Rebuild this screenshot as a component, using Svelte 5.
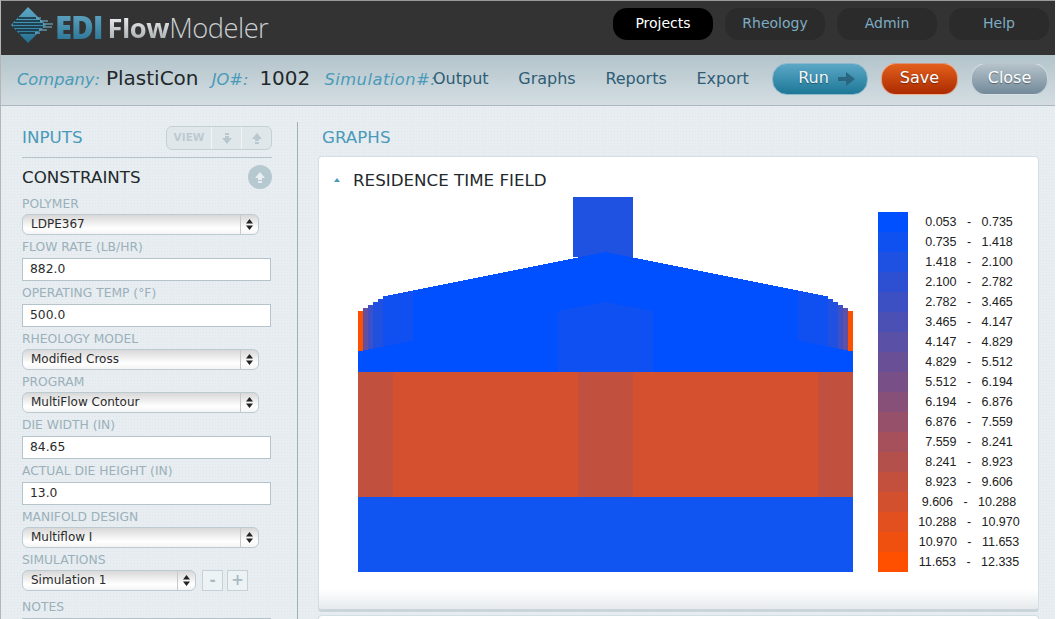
<script>
	const tabs = ['Projects', 'Rheology', 'Admin', 'Help'];
	const links = ['Output', 'Graphs', 'Reports', 'Export'];

	const fields = [
		{ label: 'POLYMER', value: 'LDPE367', kind: 'select' },
		{ label: 'FLOW RATE (LB/HR)', value: '882.0', kind: 'input' },
		{ label: 'OPERATING TEMP (°F)', value: '500.0', kind: 'input' },
		{ label: 'RHEOLOGY MODEL', value: 'Modified Cross', kind: 'select' },
		{ label: 'PROGRAM', value: 'MultiFlow Contour', kind: 'select' },
		{ label: 'DIE WIDTH (IN)', value: '84.65', kind: 'input' },
		{ label: 'ACTUAL DIE HEIGHT (IN)', value: '13.0', kind: 'input' },
		{ label: 'MANIFOLD DESIGN', value: 'Multiflow I', kind: 'select' }
	];

	const ranges = [
		['0.053', '0.735'], ['0.735', '1.418'], ['1.418', '2.100'], ['2.100', '2.782'],
		['2.782', '3.465'], ['3.465', '4.147'], ['4.147', '4.829'], ['4.829', '5.512'],
		['5.512', '6.194'], ['6.194', '6.876'], ['6.876', '7.559'], ['7.559', '8.241'],
		['8.241', '8.923'], ['8.923', '9.606'], ['9.606', '10.288'], ['10.288', '10.970'],
		['10.970', '11.653'], ['11.653', '12.335']
	];

	// legend runs from pure blue to pure orange
	function ramp(i) {
		const t = i / (ranges.length - 1);
		const r = Math.round(255 * t);
		const b = Math.round(255 * (1 - t));
		return `rgb(${r},80,${b})`;
	}

	const width = 495;
	const step = 5;

	// one 5px column per entry, from the left wall inward; the right wall mirrors it
	const columns = [];
	columns.push({ x: 5, top: 111, bottom: 153, fill: '#0050ff' });
	columns.push({ x: 10, top: 108, bottom: 152, fill: '#0050ff' });
	columns.push({ x: 15, top: 105, bottom: 151, fill: '#0050ff' });
	columns.push({ x: 20, top: 102, bottom: 150, fill: '#0050ff' });
	for (let x = 25, top = 99; x < 245; x += step, top -= 1) {
		columns.push({ x, top, bottom: 175, fill: '#0050ff' });
	}

	// the shaded columns near the walls
	const shades = [
		{ x: 5, top: 111, bottom: 153, fill: '#5f50a6' },
		{ x: 10, top: 108, bottom: 152, fill: '#3f50c6' },
		{ x: 15, top: 105, bottom: 151, fill: '#2050e0' },
		{ x: 20, top: 102, bottom: 150, fill: '#2050e0' }
	];
	for (let x = 25, top = 99, bottom = 149; x < 55; x += step, top -= 1, bottom -= 1) {
		shades.push({ x, top, bottom, fill: '#1050f0' });
	}

	const flip = (c) => ({ ...c, x: width - c.x - step });

	// logo streaks: [y, start, end of the dark part, end of the light tip]
	const streaks = [
		[11, 8, 26, 31],
		[14, 5, 30, 38],
		[17, 3, 33, 43],
		[20, 3, 33, 42],
		[23, 6, 29, 37],
		[26, 9, 25, 30]
	];
</script>

<div class="window">
	<header class="topbar">
		<div class="logo">
			<svg width="44" height="36" viewBox="0 0 44 36" aria-hidden="true">
				<defs>
					<linearGradient id="diamond" x1="0" y1="0" x2="0" y2="1">
						<stop offset="0" stop-color="#5fa9c8" />
						<stop offset="1" stop-color="#246f90" />
					</linearGradient>
				</defs>
				<path d="M1 18 L18 0 L36 18 L18 36 Z" fill="url(#diamond)" />
				{#each streaks as [y, a, b, c]}
					<path d="M{a} {y} H{b}" stroke="#17303c" stroke-width="1.6" />
					<path d="M{b} {y} H{c}" stroke="#6fa8c0" stroke-width="1.2" />
				{/each}
			</svg>
			<span class="edi">EDI</span>
			<span class="flow">Flow</span><span class="modeler">Modeler</span>
		</div>
		<nav class="tabs">
			{#each tabs as tab, i}
				<span class="tab" class:active={i === 0}>{tab}</span>
			{/each}
		</nav>
	</header>

	<div class="toolbar">
		<div class="info">
			<em>Company:</em><b class="company">PlastiCon</b>
			<em>JO#:</em><b class="jo">1002</b>
			<em class="sim-label">Simulation#:</em>
		</div>
		<div class="links">
			{#each links as link}
				<span>{link}</span>
			{/each}
		</div>
		<div class="actions">
			<button class="run">Run
				<svg width="17" height="14" viewBox="0 0 17 14" aria-hidden="true">
					<path d="M0 5 H8 V0 L17 7 L8 14 V9 H0 Z" fill="#2b6680" />
				</svg>
			</button>
			<button class="save">Save</button>
			<button class="close">Close</button>
		</div>
	</div>

	<div class="body">
		<aside class="inputs">
			<div class="inputs-head">
				<h2>INPUTS</h2>
				<div class="view-group">
					<span class="view">VIEW</span>
					<span class="view-btn">
						<svg width="10" height="11" viewBox="0 0 10 11" aria-hidden="true"><path d="M3 0 H7 V2 H3 Z M3 3 H7 V5 H10 L5 11 L0 5 H3 Z" fill="#b9c8cf" /></svg>
					</span>
					<span class="view-btn">
						<svg width="10" height="11" viewBox="0 0 10 11" aria-hidden="true"><path d="M5 0 L10 6 H7 V8 H3 V6 H0 Z M3 9 H7 V11 H3 Z" fill="#b9c8cf" /></svg>
					</span>
				</div>
			</div>
			<div class="constraints">
				<h3>CONSTRAINTS</h3>
				<span class="collapse">
					<svg width="10" height="11" viewBox="0 0 10 11" aria-hidden="true"><path d="M5 0 L10 6 H7 V8 H3 V6 H0 Z M3 9 H7 V11 H3 Z" fill="#e8eef1" /></svg>
				</span>
			</div>

			{#each fields as field}
				<div class="field {field.kind}-field">
					<span class="label">{field.label}</span>
					{#if field.kind === 'select'}
						<div class="select">
							<span>{field.value}</span>
							<i class="stepper"><svg width="7" height="11" viewBox="0 0 7 11" aria-hidden="true"><path d="M3.5 0 L7 4.5 H0 Z M3.5 11 L0 6.5 H7 Z" fill="#222" /></svg></i>
						</div>
					{:else}
						<input class="text" value={field.value} />
					{/if}
				</div>
			{/each}

			<div class="field sim-field">
				<span class="label">SIMULATIONS</span>
				<div class="sim-row">
					<div class="select sim">
						<span>Simulation 1</span>
						<i class="stepper"><svg width="7" height="11" viewBox="0 0 7 11" aria-hidden="true"><path d="M3.5 0 L7 4.5 H0 Z M3.5 11 L0 6.5 H7 Z" fill="#222" /></svg></i>
					</div>
					<span class="square">-</span>
					<span class="square">+</span>
				</div>
			</div>

			<div class="field">
				<span class="label">NOTES</span>
				<div class="notes"></div>
			</div>
		</aside>

		<main class="graphs">
			<h2>GRAPHS</h2>
			<section class="card">
				<h4><i class="tri"></i>RESIDENCE TIME FIELD</h4>
				<div class="plot">
					<svg class="field-plot" width="495" height="375" viewBox="0 0 495 375" shape-rendering="crispEdges" aria-hidden="true">
						<rect x="215" y="0" width="60" height="60" fill="#1f52e0" />
						<!-- base of the die under the stepped columns -->
						<rect x="0" y="154" width={width} height="21" fill="#0050ff" />
						<polygon points="5,153 25,149 55,144 55,175 5,175" fill="#0050ff" />
						<polygon points="490,153 470,149 440,144 440,175 490,175" fill="#0050ff" />
						<rect x="245" y="55" width="5" height="120" fill="#0050ff" />
						{#each columns as c}
							<rect x={c.x} y={c.top} width={step} height={c.bottom - c.top} fill={c.fill} />
							<rect x={flip(c).x} y={c.top} width={step} height={c.bottom - c.top} fill={c.fill} />
						{/each}
						{#each shades as c}
							<rect x={c.x} y={c.top} width={step} height={c.bottom - c.top} fill={c.fill} />
							<rect x={flip(c).x} y={c.top} width={step} height={c.bottom - c.top} fill={c.fill} />
						{/each}
						<rect x="0" y="114" width="5" height="40" fill="#ff5000" />
						<rect x="490" y="114" width="5" height="40" fill="#ff5000" />
						<polygon points="200,114 247,105 295,114 295,175 200,175" fill="#0f50f2" />
						<rect x="0" y="175" width={width} height="125" fill="#d4502e" />
						<rect x="0" y="175" width="35" height="125" fill="#c2503f" />
						<rect x="220" y="175" width="55" height="125" fill="#c2503f" />
						<rect x="460" y="175" width="35" height="125" fill="#c2503f" />
						<rect x="0" y="300" width={width} height="75" fill="#1055f2" />
					</svg>
					<ul class="legend">
						{#each ranges as [from, to], i}
							<li>
								<i class="swatch" style="background: {ramp(i)}"></i>
								<span class="range">{from}   -   {to}</span>
							</li>
						{/each}
					</ul>
				</div>
			</section>
			<div class="card next"></div>
		</main>
	</div>
</div>

<style>
	:global(body) {
		background: #fff;
	}
	.window {
		width: 1055px;
		height: 619px;
		overflow: hidden;
		display: flex;
		flex-direction: column;
		font-family: "DejaVu Sans", Verdana, sans-serif;
		border-left: 1px solid #b5b5b5;
		border-top: 1px solid #9a9a9a;
		box-sizing: border-box;
		background-color: #e7edf0;
		background-image: radial-gradient(#dfe6ea 1px, transparent 1px);
		background-size: 3px 3px;
	}

	.topbar {
		flex: 0 0 54px;
		background: #333;
		display: flex;
		align-items: flex-start;
		justify-content: space-between;
		padding: 7px 6px 0 9px;
		box-sizing: border-box;
	}
	.logo {
		display: flex;
		align-items: center;
		height: 36px;
		margin-top: 1px;
		font-family: "Open Sans", sans-serif;
		font-size: 27.3px;
		letter-spacing: -0.5px;
	}
	.logo svg {
		margin: -4px 1px 0 0;
	}
	.edi {
		font-weight: 800;
		font-size: 31px;
		margin-right: 5px;
		letter-spacing: -1px;
		background: linear-gradient(#6cb0cc, #1f6a8c);
		-webkit-background-clip: text;
		background-clip: text;
		color: transparent;
	}
	.flow {
		font-weight: 700;
		background: linear-gradient(#fff, #9aa0a4);
		-webkit-background-clip: text;
		background-clip: text;
		color: transparent;
	}
	.modeler {
		font-weight: 300;
		color: #c9ced1;
	}
	.tabs {
		display: flex;
		gap: 12px;
	}
	.tab {
		width: 100px;
		height: 32px;
		border-radius: 14px;
		background: #2b2b2b;
		color: #7fabc4;
		font-size: 14px;
		line-height: 30px;
		text-align: center;
	}
	.tab.active {
		background: #000;
		color: #fff;
	}

	.toolbar {
		flex: 0 0 51px;
		display: flex;
		align-items: flex-start;
		padding: 8px 7px 0 16px;
		box-sizing: border-box;
		background: linear-gradient(#b3c4cb, #d4dee2);
		border-bottom: 1px solid #aab8bd;
	}
	.info {
		flex: 0 0 416px;
		min-width: 0;
		white-space: nowrap;
		height: 32px;
		line-height: 30px;
	}
	.info em {
		font-size: 16.3px;
		color: #4a9ab9;
	}
	.info .sim-label {
		letter-spacing: 0.5px;
	}
	.info b {
		font-weight: 400;
		font-size: 20px;
		color: #23282b;
		margin-left: 6px;
	}
	.info .jo {
		margin-left: 11px;
		margin-right: 9px;
	}
	.company {
		margin-right: 8px;
	}
	.links {
		display: flex;
		gap: 29.7px;
		color: #2f5d75;
		font-size: 16px;
		line-height: 32px;
	}
	.actions {
		display: flex;
		margin-left: auto;
		gap: 13px;
	}
	.actions button {
		height: 32px;
		width: 77px;
		border-radius: 15px;
		font-family: inherit;
		font-size: 16px;
		color: #fff;
		padding: 0 0 4px;
		border: 1px solid rgba(255, 255, 255, 0.5);
		text-shadow: 0 1px 1px rgba(0, 0, 0, 0.4);
	}
	.actions .run {
		width: 96px;
		background: linear-gradient(#5ba7c6, #1d7797);
		display: flex;
		align-items: center;
		justify-content: center;
		gap: 9px;
		padding-left: 13px;
		color: #eef6fa;
		border-color: #8db9cc;
	}
	.actions .run svg {
		margin-top: 3px;
	}
	.actions .save {
		background: linear-gradient(#e2601c, #ab2a00);
	}
	.actions .close {
		background: linear-gradient(#b6c3ca, #72899a);
	}

	.body {
		flex: 1;
		display: flex;
		min-height: 0;
	}
	.inputs {
		flex: 0 0 297px;
		width: 297px;
		box-sizing: border-box;
		padding: 4px 25px 0 21px;
		border-right: 1px solid #9fb0b8;
		margin-top: 16px;
	}
	.inputs-head {
		display: flex;
		justify-content: space-between;
		align-items: flex-start;
		height: 32px;
		box-sizing: border-box;
		border-bottom: 1px solid #b5c3ca;
	}
	.inputs-head h2,
	.graphs h2 {
		margin: 0;
		font-size: 16.7px;
		font-weight: 400;
		color: #4a9ab9;
		line-height: 22px;
	}
	.view-group {
		display: flex;
		height: 22px;
		border: 1px solid #c5d1d7;
		border-radius: 6px;
		background: #dfe7ea;
		font-size: 10.5px;
		font-weight: 700;
		color: #bccad0;
	}
	.view {
		width: 44px;
		line-height: 21px;
		text-align: center;
		border-right: 1px solid #f1f5f6;
	}
	.view-btn {
		width: 29px;
		display: flex;
		align-items: center;
		justify-content: center;
		border-right: 1px solid #f1f5f6;
	}
	.view-btn:last-child {
		border-right: 0;
	}
	.constraints {
		display: flex;
		justify-content: space-between;
		align-items: center;
		height: 24px;
		margin: 7px 0 8px;
	}
	.constraints h3 {
		margin: 0;
		font-size: 16.7px;
		font-weight: 400;
		color: #23282b;
	}
	.collapse {
		width: 24px;
		height: 24px;
		border-radius: 50%;
		background: #b6c8d0;
		display: flex;
		align-items: center;
		justify-content: center;
	}
	.field {
		display: flex;
		flex-direction: column;
		align-items: flex-start;
	}
	.select-field {
		height: 43px;
	}
	.input-field {
		height: 46px;
	}
	.sim-field {
		height: 47px;
	}
	.label {
		height: 15px;
		line-height: 15px;
		margin-bottom: 3px;
		font-size: 12.3px;
		color: #9bb0bb;
		white-space: nowrap;
	}
	.select {
		width: 237px;
		height: 21px;
		margin-top: -1px;
		box-sizing: border-box;
		display: flex;
		justify-content: space-between;
		border: 1px solid #bccbd2;
		border-radius: 6px;
		background: linear-gradient(#d8d8d8, #fff 70%, #f4f4f4);
		font-size: 12px;
		line-height: 19px;
		color: #2a2a2a;
		padding-left: 8px;
	}
	.stepper {
		width: 17px;
		display: flex;
		align-items: center;
		justify-content: center;
		border-left: 1px solid #c9c9c9;
	}
	.text {
		width: 249px;
		height: 23px;
		box-sizing: border-box;
		border: 1px solid #b5c3ca;
		border-radius: 0;
		background: #fff;
		font-family: inherit;
		font-size: 12.3px;
		color: #2a2a2a;
		padding: 0 7px 1px;
		outline: none;
	}
	.sim-row {
		display: flex;
		gap: 4px;
	}
	.select.sim {
		width: 174px;
		margin-right: 2px;
	}
	.square {
		width: 21px;
		height: 21px;
		margin-top: -1px;
		box-sizing: border-box;
		border: 1px solid #c5d1d7;
		background: #edf2f4;
		color: #a9bac3;
		font-size: 15px;
		font-weight: 700;
		line-height: 18px;
		text-align: center;
	}
	.notes {
		width: 249px;
		height: 40px;
		border: 1px solid #b5c3ca;
		background: #fff;
		box-sizing: border-box;
	}

	.graphs {
		flex: 1;
		min-width: 0;
		padding: 21px 16px 0 20px;
	}
	.graphs h2 {
		line-height: 20px;
		margin: 0 0 9px 4px;
	}
	.card {
		height: 456px;
		box-sizing: border-box;
		background: linear-gradient(#fff 432px, #e6eaec);
		border: 1px solid #d5dee2;
		border-bottom: 3px solid #c9d5da;
		border-radius: 4px;
	}
	.card.next {
		height: 40px;
		margin-top: 3px;
		background: #fff;
	}
	.card h4 {
		margin: 0;
		height: 40px;
		display: flex;
		align-items: center;
		padding: 6px 0 0 15px;
		box-sizing: border-box;
		font-size: 16.7px;
		font-weight: 400;
		color: #23282b;
	}
	.tri {
		width: 0;
		height: 0;
		margin-right: 13px;
		border: 3.5px solid transparent;
		border-top: 0;
		border-bottom: 4px solid #4a9ab9;
	}
	.plot {
		display: flex;
		align-items: flex-end;
		padding-left: 39px;
		gap: 25px;
	}
	.field-plot {
		display: block;
	}
	.legend {
		list-style: none;
		margin: 0;
		padding: 0;
	}
	.legend li {
		display: flex;
		height: 20px;
		font-family: "Liberation Sans", Arial, sans-serif;
		font-size: 12.5px;
		line-height: 21px;
		color: #222;
	}
	.swatch {
		width: 30px;
	}
	.range {
		width: 122px;
		text-align: center;
		white-space: pre;
	}
</style>
